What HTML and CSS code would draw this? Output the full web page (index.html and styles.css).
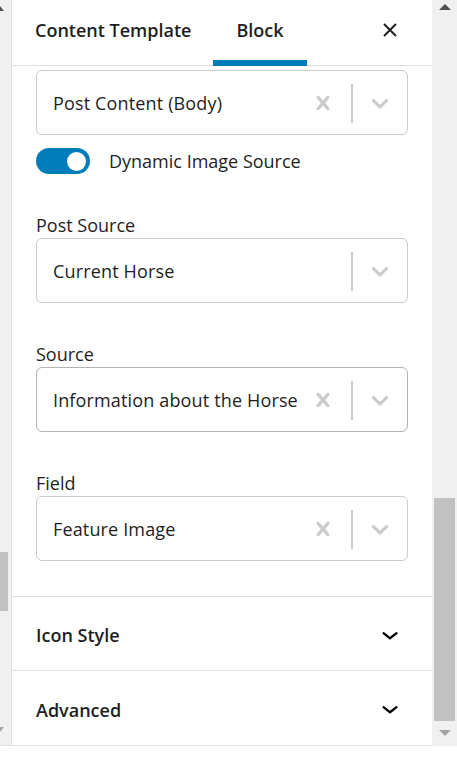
FILE: index.html
```html
<!DOCTYPE html>
<html lang="en">
<head>
    <meta charset="UTF-8">
    <meta name="viewport" content="width=device-width, initial-scale=1.0">
    <title>Block Settings</title>
    <link rel="stylesheet" href="styles.css">
</head>
<body>
    <div class="frame">
        <!-- left edge of the editor scrollbar -->
        <div class="gutter">
            <span class="gutter-arrow up"></span>
            <span class="gutter-thumb"></span>
            <span class="gutter-arrow down"></span>
        </div>

        <aside class="panel">
            <header class="panel-header">
                <div class="tab">Content Template</div>
                <div class="tab active">Block</div>
                <button class="close-btn" aria-label="Close settings">
                    <svg width="16" height="16" viewBox="0 0 16 16"><path d="M2 2L14 14M14 2L2 14" stroke="#1e1e1e" stroke-width="1.9" fill="none"/></svg>
                </button>
            </header>

            <div class="panel-body">
                <section class="settings">
                    <div class="select">
                        <span class="select-value">Post Content (Body)</span>
                        <span class="clear-icon">
                            <svg width="28" height="28" viewBox="0 0 20 20"><path d="M14.348 14.849c-0.469 0.469-1.229 0.469-1.697 0l-2.651-3.030-2.651 3.029c-0.469 0.469-1.229 0.469-1.697 0-0.469-0.469-0.469-1.229 0-1.697l2.758-3.15-2.759-3.152c-0.469-0.469-0.469-1.228 0-1.697s1.228-0.469 1.697 0l2.652 3.031 2.651-3.031c0.469-0.469 1.228-0.469 1.697 0s0.469 1.229 0 1.697l-2.758 3.152 2.758 3.15c0.469 0.469 0.469 1.229 0 1.698z"/></svg>
                        </span>
                        <span class="separator"></span>
                        <span class="chevron-icon">
                            <svg width="28" height="28" viewBox="0 0 20 20"><path d="M4.516 7.548c0.436-0.446 1.043-0.481 1.576 0l3.908 3.747 3.908-3.747c0.533-0.481 1.141-0.446 1.574 0 0.436 0.445 0.408 1.197 0 1.615-0.406 0.418-4.695 4.502-4.695 4.502-0.217 0.223-0.502 0.335-0.787 0.335s-0.57-0.112-0.789-0.335c0 0-4.287-4.084-4.695-4.502s-0.436-1.17 0-1.615z"/></svg>
                        </span>
                    </div>

                    <label class="toggle-row">
                        <span class="toggle on"><span class="knob"></span></span>
                        <span>Dynamic Image Source</span>
                    </label>

                    <div class="field">
                        <div class="field-label">Post Source</div>
                        <div class="select">
                            <span class="select-value">Current Horse</span>
                            <span class="separator"></span>
                            <span class="chevron-icon">
                                <svg width="28" height="28" viewBox="0 0 20 20"><path d="M4.516 7.548c0.436-0.446 1.043-0.481 1.576 0l3.908 3.747 3.908-3.747c0.533-0.481 1.141-0.446 1.574 0 0.436 0.445 0.408 1.197 0 1.615-0.406 0.418-4.695 4.502-4.695 4.502-0.217 0.223-0.502 0.335-0.787 0.335s-0.57-0.112-0.789-0.335c0 0-4.287-4.084-4.695-4.502s-0.436-1.17 0-1.615z"/></svg>
                            </span>
                        </div>
                    </div>

                    <div class="field">
                        <div class="field-label">Source</div>
                        <div class="select hover">
                            <span class="select-value">Information about the Horse</span>
                            <span class="clear-icon">
                                <svg width="28" height="28" viewBox="0 0 20 20"><path d="M14.348 14.849c-0.469 0.469-1.229 0.469-1.697 0l-2.651-3.030-2.651 3.029c-0.469 0.469-1.229 0.469-1.697 0-0.469-0.469-0.469-1.229 0-1.697l2.758-3.15-2.759-3.152c-0.469-0.469-0.469-1.228 0-1.697s1.228-0.469 1.697 0l2.652 3.031 2.651-3.031c0.469-0.469 1.228-0.469 1.697 0s0.469 1.229 0 1.697l-2.758 3.152 2.758 3.15c0.469 0.469 0.469 1.229 0 1.698z"/></svg>
                            </span>
                            <span class="separator"></span>
                            <span class="chevron-icon">
                                <svg width="28" height="28" viewBox="0 0 20 20"><path d="M4.516 7.548c0.436-0.446 1.043-0.481 1.576 0l3.908 3.747 3.908-3.747c0.533-0.481 1.141-0.446 1.574 0 0.436 0.445 0.408 1.197 0 1.615-0.406 0.418-4.695 4.502-4.695 4.502-0.217 0.223-0.502 0.335-0.787 0.335s-0.57-0.112-0.789-0.335c0 0-4.287-4.084-4.695-4.502s-0.436-1.17 0-1.615z"/></svg>
                            </span>
                        </div>
                    </div>

                    <div class="field">
                        <div class="field-label">Field</div>
                        <div class="select">
                            <span class="select-value">Feature Image</span>
                            <span class="clear-icon">
                                <svg width="28" height="28" viewBox="0 0 20 20"><path d="M14.348 14.849c-0.469 0.469-1.229 0.469-1.697 0l-2.651-3.030-2.651 3.029c-0.469 0.469-1.229 0.469-1.697 0-0.469-0.469-0.469-1.229 0-1.697l2.758-3.15-2.759-3.152c-0.469-0.469-0.469-1.228 0-1.697s1.228-0.469 1.697 0l2.652 3.031 2.651-3.031c0.469-0.469 1.228-0.469 1.697 0s0.469 1.229 0 1.697l-2.758 3.152 2.758 3.150c0.469 0.469 0.469 1.229 0 1.698z"/></svg>
                            </span>
                            <span class="separator"></span>
                            <span class="chevron-icon">
                                <svg width="28" height="28" viewBox="0 0 20 20"><path d="M4.516 7.548c0.436-0.446 1.043-0.481 1.576 0l3.908 3.747 3.908-3.747c0.533-0.481 1.141-0.446 1.574 0 0.436 0.445 0.408 1.197 0 1.615-0.406 0.418-4.695 4.502-4.695 4.502-0.217 0.223-0.502 0.335-0.787 0.335s-0.57-0.112-0.789-0.335c0 0-4.287-4.084-4.695-4.502s-0.436-1.17 0-1.615z"/></svg>
                            </span>
                        </div>
                    </div>
                </section>

                <!-- Collapsed panels -->
                <div class="accordion">
                    <span>Icon Style</span>
                    <svg width="34" height="34" viewBox="0 0 24 24"><path d="M17.5 11.6L12 16l-5.5-4.4.9-1.2L12 14l4.6-3.6 1 1.2z"/></svg>
                </div>
                <div class="accordion">
                    <span>Advanced</span>
                    <svg width="34" height="34" viewBox="0 0 24 24"><path d="M17.5 11.6L12 16l-5.5-4.4.9-1.2L12 14l4.6-3.6 1 1.2z"/></svg>
                </div>
            </div>
        </aside>

        <div class="scrollbar">
            <span class="arrow up"></span>
            <span class="thumb"></span>
            <span class="arrow down"></span>
        </div>
    </div>
</body>
</html>
```

FILE: styles.css
```css
/* Block settings sidebar */
:root {
    --primary-color: #007cba;
    --text-color: #1e1e1e;
    --border-color: #e0e0e0;
    --select-border: #cccccc;
    --muted-icon: #cccccc;
}

* {
    box-sizing: border-box;
    margin: 0;
    padding: 0;
}

body {
    font-family: 'Open Sans', 'Noto Sans', sans-serif;
    font-size: 18px;
    color: var(--text-color);
    background-color: #fff;
}

.frame {
    display: flex;
    height: 746px;
}

/* Left scrollbar edge */
.gutter {
    width: 12px;
    display: flex;
    flex-direction: column;
    background-color: #f0f0f0;
    border-right: 1px solid var(--border-color);
    border-bottom: 1px solid var(--border-color);
}

.gutter-arrow {
    width: 0;
    height: 0;
    border-left: 4px solid transparent;
    border-right: 4px solid transparent;
    margin-left: -4px;
}

.gutter-arrow.up {
    border-bottom: 5px solid #505050;
    margin-top: 6px;
}

.gutter-arrow.down {
    border-top: 5px solid #a3a3a3;
    margin-top: 116px;
}

.gutter-thumb {
    width: 8px;
    height: 59px;
    margin-top: 541px;
    background-color: #c1c1c1;
}

/* Panel */
.panel {
    width: 420px;
    display: flex;
    flex-direction: column;
    border-bottom: 1px solid var(--border-color);
}

.panel-header {
    display: flex;
    align-items: stretch;
    height: 66px;
    border-bottom: 1px solid var(--border-color);
}

.tab {
    display: flex;
    align-items: center;
    padding: 0 23px;
    font-weight: 600;
    font-size: 18px;
    border-bottom: 6px solid transparent;
    margin-bottom: -1px;
}

.tab.active {
    border-bottom-color: var(--primary-color);
    margin-left: -1px;
}

.close-btn {
    margin-left: auto;
    margin-right: 34px;
    margin-top: -6px;
    background: none;
    border: none;
    display: flex;
    align-items: center;
}

.panel-body {
    display: flex;
    flex-direction: column;
}

.settings {
    padding: 4px 24px 35px;
    border-bottom: 1px solid var(--border-color);
}

/* react-select style dropdown */
.select {
    display: flex;
    align-items: center;
    height: 65px;
    border: 1px solid var(--select-border);
    border-radius: 6px;
    padding: 1px 13px 0 16px;
    letter-spacing: 0.15px;
}

.select.hover {
    border-color: #b3b3b3;
}

.select-value {
    flex: 1;
    white-space: nowrap;
    overflow: hidden;
}

.clear-icon,
.chevron-icon {
    display: flex;
    fill: var(--muted-icon);
}

.separator {
    width: 2px;
    height: 39px;
    background-color: var(--muted-icon);
    margin: 0 13px 0 14px;
}

/* Toggle */
.toggle-row {
    display: flex;
    align-items: center;
    gap: 19px;
    margin-top: 13px;
}

.toggle {
    width: 54px;
    height: 26px;
    border-radius: 13px;
    background-color: var(--primary-color);
    display: flex;
    align-items: center;
    justify-content: flex-end;
    padding-right: 4px;
}

.knob {
    width: 19px;
    height: 19px;
    border-radius: 50%;
    background-color: #fff;
}

.field {
    margin-top: 38px;
}

.field-label {
    height: 26px;
    line-height: 26px;
}

/* Accordion rows */
.accordion {
    display: flex;
    align-items: center;
    justify-content: space-between;
    height: 74px;
    padding: 3px 25px 0 24px;
    font-weight: 600;
    border-bottom: 1px solid var(--border-color);
}

.accordion svg {
    margin-top: -3px;
}

.accordion:last-child {
    border-bottom: none;
}

/* Right scrollbar */
.scrollbar {
    width: 25px;
    display: flex;
    flex-direction: column;
    align-items: center;
    background-color: #f0f0f0;
}

.arrow {
    width: 0;
    height: 0;
    border-left: 6px solid transparent;
    border-right: 6px solid transparent;
}

.arrow.up {
    margin-top: 4px;
    border-bottom: 6px solid #505050;
}

.arrow.down {
    margin-top: 9px;
    border-top: 6px solid #a3a3a3;
}

.thumb {
    width: 21px;
    height: 223px;
    margin-top: 488px;
    background-color: #c1c1c1;
}
```
